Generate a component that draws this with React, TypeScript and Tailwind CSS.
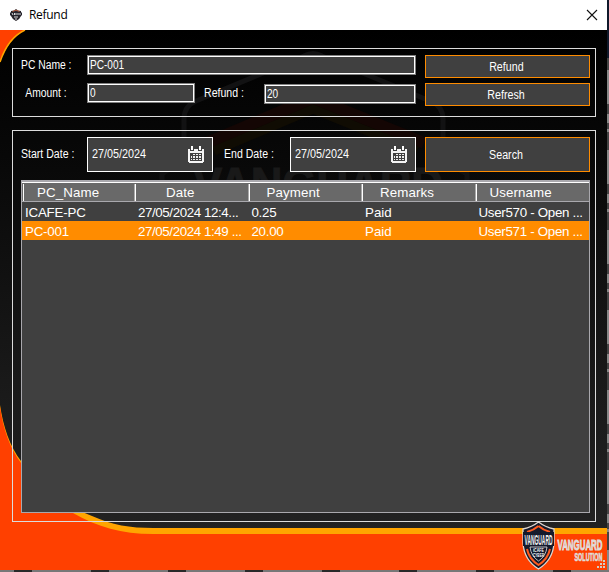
import type { ReactNode } from 'react';

function Txt({ children, className = '' }: { children: ReactNode; className?: string }) {
  return <span className={`inline-block whitespace-pre text-[12px] leading-[14px] ${className}`}>{children}</span>;
}

function Field({ value, className = '' }: { value: string; className?: string }) {
  return (
    <div className={`h-5 border border-[#808080] bg-[#404040] ${className}`}>
      <div className="flex h-full items-center border border-white pl-px">
        <Txt className="origin-left scale-x-[.84]">{value}</Txt>
      </div>
    </div>
  );
}

function Button({ label, className = '' }: { label: string; className?: string }) {
  return (
    <button className={`flex w-[165px] items-center justify-center border border-[#ff8c00] bg-[#404040] pr-[2px] ${className}`}>
      <Txt className="scale-x-[.89]">{label}</Txt>
    </button>
  );
}

function Calendar() {
  return (
    <svg width="16" height="17" viewBox="0 0 16 17" shapeRendering="crispEdges">
      <path d="M0 3h16v13h-1v1H1v-1H0z" fill="#f4f4f4" />
      <path d="M2 0h4v5H2zM10 0h4v5h-4z" fill="#404040" />
      <path d="M3 0h2v4H3zM11 0h2v4h-2z" fill="#fff" />
      <path d="M2 7h12v8H2z" fill="#404040" />
      <path d="M5 8h2v1H5zM8 8h2v1H8zM11 8h2v1h-2zM3 10h1v2H3zM5 10h2v2H5zM8 10h2v2H8zM11 10h2v2h-2zM3 13h1v1H3zM5 13h2v1H5zM8 13h2v1H8zM11 13h2v1h-2z" fill="#eee" />
    </svg>
  );
}

function DateBox() {
  return (
    <div className="flex h-[35px] w-[126px] items-center justify-between border border-white bg-[#404040] pl-1 pr-2">
      <Txt className="w-[60px] origin-left scale-x-[.9] pb-[2px]">27/05/2024</Txt>
      <Calendar />
    </div>
  );
}

function Backdrop() {
  return (
    <svg className="absolute inset-0" width="609" height="572" viewBox="0 0 609 572">
      <defs>
        <linearGradient id="dark" x1="0" y1="0" x2="0" y2="1">
          <stop offset="0" stopColor="#000" />
          <stop offset=".25" stopColor="#080808" />
          <stop offset=".75" stopColor="#1b1b1b" />
          <stop offset="1" stopColor="#222" />
        </linearGradient>
      </defs>
      <rect width="609" height="572" fill="#444" />
      <path d="M607 0h2v58h-2z" fill="#10192b" />
      <path d="M608 70v500" stroke="#888" strokeWidth="2" strokeDasharray="34 10 9 6 3 18" />
      <path d="M0 571h609" stroke="#777" strokeWidth="2" />
      <path d="M14 571h609" stroke="#292929" strokeWidth="2" strokeDasharray="18 59" />
      <path d="M0 30h607v504H0z" fill="url(#dark)" />
      <g fill="none">
        <path d="M162 220V174L184 160V119Q184 106 196 101L304 56Q313 51 322 56L430 101Q443 106 443 119V160L467 174V220" stroke="#121213" strokeWidth="5" />
        <path d="M207 143L313 98L424 143" stroke="#140604" strokeWidth="12" />
        <path d="M214 151L313 109L417 151" stroke="#100c03" strokeWidth="9" />
      </g>
      <text x="193" y="200" textLength="250" lengthAdjust="spacingAndGlyphs" fill="#191919" stroke="#191919" fontFamily="Liberation Sans" fontWeight="700" fontSize="46">VANGUARD</text>
      <path d="M0 30H25Q8 39 0 62Z" fill="#ff4000" />
      <path d="M25 30Q8 38 0 62" fill="none" stroke="#ffa500" strokeWidth="1.5" />
      <path d="M0 405C3 426 10 447 21 461C43 492 66 506 92 516C112 525 130 528 153 528H607V536H0Z" fill="#ffa500" />
      <path d="M0 407C3 428 10 449 21 463C35 485 51 501 73 513C98 527 121 534 153 534H607V570H0Z" fill="#ff4000" />
      <path d="M538.500 522Q545 527 554 529V543Q553 560 538.500 569Q524 560 523 543V529Q532 527 538.500 522Z" fill="#161a2a" stroke="#ded6d0" strokeWidth="1.300" />
      <path d="M538.500 526Q543 530 550 532M527 532Q534 530 538.500 526M527 549Q529 559 538.500 565Q548 559 550 549" fill="none" stroke="#ff5a1f" strokeWidth="2" />
      <path d="M530 547H547Q546 556 538.500 561Q531 556 530 547Z" fill="#10172a" stroke="#e6e6e6" strokeWidth=".8" />
      <path d="M523 532H554V546H523Z" fill="#141a2c" />
      <g fontFamily="Liberation Sans" fontWeight="700">
        <text x="524.500" y="545" textLength="28" lengthAdjust="spacingAndGlyphs" fill="#f2f2f2" fontSize="15">VANGUARD</text>
        <text x="533" y="552" textLength="11" lengthAdjust="spacingAndGlyphs" fill="#fff" fontSize="4.500">iCAFE</text>
        <text x="533" y="557" textLength="11" lengthAdjust="spacingAndGlyphs" fill="#fff" fontSize="4.500">CYBER</text>
        <g fill="#e0dcda" stroke="#e0dcda" strokeWidth="1">
          <text x="557.500" y="550" textLength="45" lengthAdjust="spacingAndGlyphs" fontSize="15">VANGUARD</text>
          <text x="574.500" y="561" textLength="28" lengthAdjust="spacingAndGlyphs" fontSize="10" strokeWidth=".6">SOLUTION</text>
        </g>
      </g>
      <path d="M603 560h2v2h-2zM600 563h2v2h-2zM603 563h2v2h-2zM597 566h2v2h-2zM600 566h2v2h-2zM603 566h2v2h-2z" fill="#d4cbc5" />
    </svg>
  );
}

const columns = ['PC_Name', 'Date', 'Payment', 'Remarks', 'Username'];
const rows = [
  ['ICAFE-PC', '27/05/2024 12:4...', '0.25', 'Paid', 'User570 - Open ...'],
  ['PC-001', '27/05/2024 1:49 ...', '20.00', 'Paid', 'User571 - Open ...'],
];
const headPad = ['pl-[13px]', 'pl-[30px]', 'pl-[17px]', 'pl-[17px]', 'pl-[13px]'];
const cellTracking = ['tracking-[-.2px]', 'tracking-[-.4px]', 'tracking-[-.3px]', 'tracking-normal', 'tracking-[-.3px]'];

export default function App() {
  return (
    <div className="relative h-[572px] w-[609px] overflow-hidden font-['Liberation_Sans',Arial,sans-serif] text-white">
      <Backdrop />
      <div className="relative flex h-[570px] w-[607px] flex-col">
        <header className="flex h-[30px] items-center justify-between bg-white pb-px pl-[10px] pr-[9px] text-black">
          <div className="flex items-center gap-[7px]">
            <svg width="12" height="12" viewBox="0 0 12 12">
              <path d="M1 2L4 1.500L6 0L8 1.500L11 2V7Q10 10 6 12Q2 10 1 7Z" fill="#28242a" />
              <path d="M2.500 2.500L6 1.200L9.500 2.500" fill="none" stroke="#d2603b" strokeWidth=".8" />
              <path d="M0 3.500H12V6.500H0Z" fill="#24232c" />
              <path d="M2 4L3 6M4.500 6V4M6 4V6M8 4V6M10 4V6M4 8H8M5 10H7" stroke="#eee" strokeWidth=".9" />
            </svg>
            <span className="pt-px font-['Open_Sans',sans-serif] text-[12px] leading-4 tracking-[-.3px]">Refund</span>
          </div>
          <svg width="12" height="12" viewBox="0 0 12 12">
            <path d="M1 1L11 11M11 1L1 11" stroke="#111" strokeWidth="1.100" />
          </svg>
        </header>

        <section className="ml-3 mt-[18px] flex h-[69px] w-[584px] justify-between border border-[#dcdcdc] pl-2 pr-[5px] pt-[6px]">
          <div className="flex w-[395px] flex-col gap-2">
            <div className="flex">
              <Txt className="w-[66px] origin-left scale-x-[.86] pt-[3px]">PC Name :</Txt>
              <Field value="PC-001" className="w-[329px]" />
            </div>
            <div className="flex">
              <Txt className="w-[66px] origin-left scale-x-[.86] pl-[5px] pt-[3px]">Amount :</Txt>
              <Field value="0" className="w-[108px]" />
              <Txt className="ml-[9px] w-[60px] origin-left scale-x-[.88] pt-[3px]">Refund :</Txt>
              <Field value="20" className="mt-px w-[152px]" />
            </div>
          </div>
          <div className="flex flex-col gap-[5px]">
            <Button label="Refund" className="h-[23px]" />
            <Button label="Refresh" className="h-[23px]" />
          </div>
        </section>

        <section className="ml-3 mt-[13px] h-[392px] w-[584px] border border-[#dcdcdc] pl-2 pr-[5px] pt-[6px]">
          <div className="flex items-center">
            <Txt className="w-[66px] origin-left scale-x-[.88] pb-[2px]">Start Date :</Txt>
            <DateBox />
            <Txt className="ml-[11px] w-[66px] origin-left scale-x-[.88] pb-[2px]">End Date :</Txt>
            <DateBox />
            <Button label="Search" className="ml-[9px] h-[35px]" />
          </div>

          <div className="mt-2 h-[333px] w-[569px] border border-[#a9a8ad] bg-[#404040] text-[13.333px]">
            <div className="flex h-[21px] border-b border-t border-[#a9a8ad] bg-[#696969]">
              {columns.map((name, i) => (
                <div key={name} className={`flex h-full items-center border-t border-white ${i === 0 ? 'w-[112px] shrink-0' : i === 4 ? 'flex-1' : 'w-[113.500px] shrink-0'}`}>
                  <span className={`h-[17px] border-r border-white ${i === 0 ? 'ml-px w-px' : 'w-0.5 border-l border-l-[#aaa]'}`} />
                  <span className={`pt-px leading-4 tracking-[.1px] ${headPad[i]}`}>{name}</span>
                </div>
              ))}
            </div>
            {rows.map((row, i) => (
              <div key={row[0]} className={`flex h-[19px] items-center whitespace-pre pt-[2px] ${i === 1 ? 'bg-[#ff8c00]' : 'bg-[#404040]'}`}>
                {row.map((cell, j) => (
                  <span key={j} className={`pl-[3px] leading-4 ${cellTracking[j]} ${j === 4 ? 'flex-1' : j === 0 ? 'w-[113px] shrink-0' : 'w-[113.500px] shrink-0'}`}>{cell}</span>
                ))}
              </div>
            ))}
          </div>
        </section>
      </div>
    </div>
  );
}
